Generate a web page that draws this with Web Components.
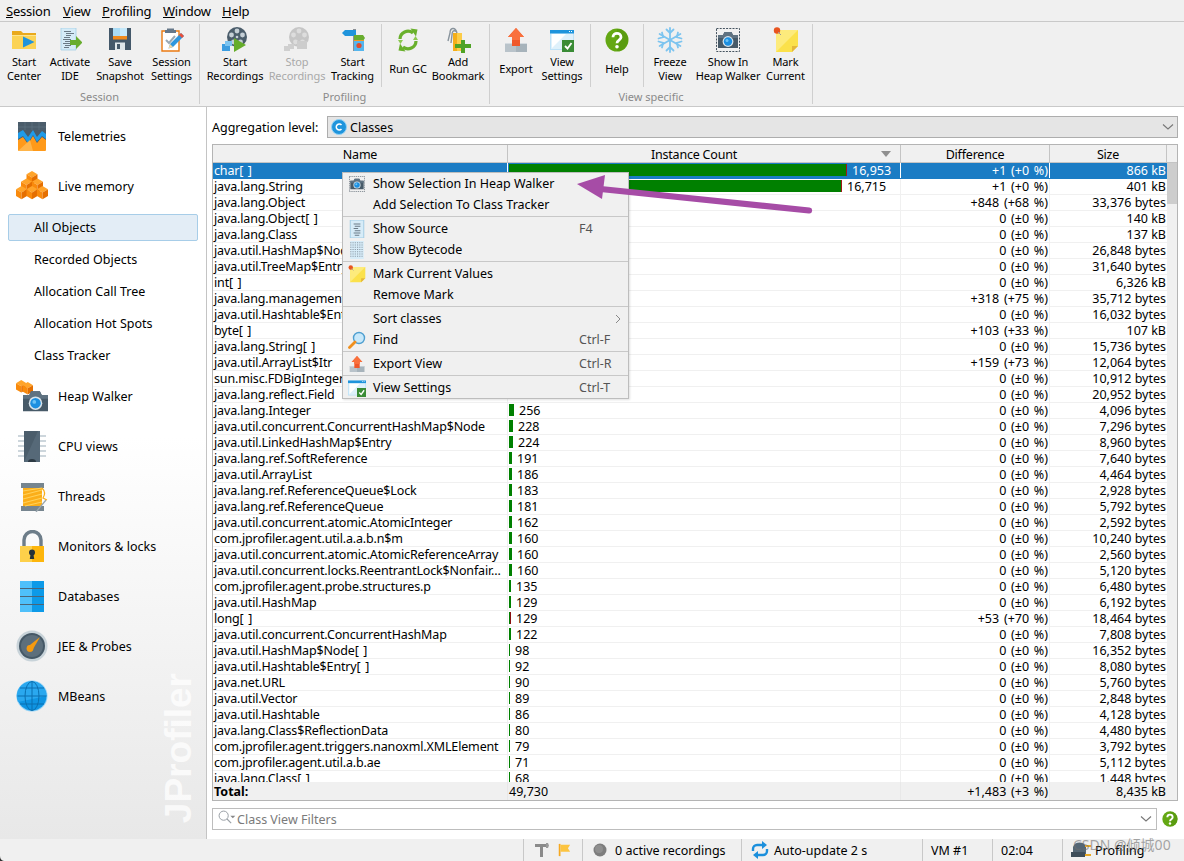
<!DOCTYPE html>
<html><head><meta charset="utf-8">
<style>
html,body{margin:0;padding:0;background:#f0f0f0}
body{font:12.5px "Noto Sans","Noto Sans CJK SC",sans-serif;color:#000}
</style></head><body>
<jp-app></jp-app>
<script>
const cube=(x,y,s=1)=>`<g transform="translate(${x} ${y}) scale(${s})"><path d="M0 3 5 0l5 3-5 3z" fill="#ffa42a"/><path d="M0 3l5 3v6L0 9z" fill="#f98a0c"/><path d="M10 3 5 6v6l5-3z" fill="#e56f00"/></g>`;
const camera=(x,y,s=1)=>`<g transform="translate(${x} ${y}) scale(${s})"><path d="M0 4h5l1.500-3h7L15 4h5v13H0z" fill="#475a68"/><path d="M0 4h5l1.500-3h7L15 4h5v3H0z" fill="#5f7281"/><circle cx="10" cy="10.500" r="5.400" fill="#d8e4ec"/><circle cx="10" cy="10.500" r="4.200" fill="#1c8fe0"/><circle cx="9" cy="9.500" r="1.500" fill="#6cc4f7"/></g>`;
const ICONS={
start:[24,`<path d="M0 3h9l2 2h13v16H0z" fill="#e9a91c"/><path d="M0 7h24v14H0z" fill="#fbd355"/><path d="M0 7h24v1H0z" fill="#fde58e"/><path d="M11 8.500 22.500 14 11 19.500z" fill="#1f94dc"/>`],
ide:[24,`<path d="M3 0h15v22H3z" fill="#d5ebf7" stroke="#a4cfe6" stroke-width=".8"/><g fill="#6b7a86"><path d="M6 3h7v1H6zM8 5h8v1H8zM8 7h5v1H8zM6 9h6v1H6zM5 11h8v1H5zM7 13h5v1H7zM5 15h7v1H5zM7 17h6v1H7zM6 19h5v1H6z"/></g><path d="M12 12h6V8l6.500 6.500L18 21v-4h-6z" fill="#68ad2e"/>`],
save:[24,`<path d="M1 0h22v22H1z" fill="#44586a"/><path d="M5 0h14v11H5z" fill="#a9dbf5"/><path d="M12 0h7v11h-7z" fill="#c5e8fa"/><path d="M5 8h14v3.500H5z" fill="#f08a1d"/><path d="M7 14.500h10V22H7z" fill="#dfe6ea"/><path d="M9 16h3v5H9z" fill="#44586a"/>`],
settings:[24,`<path d="M2 3h17v20H2z" fill="#fff" stroke="#ea7a12" stroke-width="1.400"/><path d="M7 .5h7V2h2v3H5V2h2z" fill="#66788a"/><path d="M6 12l3 3 6-7" fill="none" stroke="#9aa9b4" stroke-width="2"/><path d="M21 5l3 3-11 11-4.500 1.500L10 16z" fill="#2f96dd"/><path d="M21 5l3 3-2 2-3-3z" fill="#e8503a"/><path d="M10 16l3 3-4.500 1.500z" fill="#f4d7a4"/>`],
rec:[26,`<circle cx="15" cy="10" r="10" fill="#4b5d6b"/><g fill="#c5cfd6"><circle cx="15" cy="4" r="2.400"/><circle cx="9.500" cy="8" r="2.400"/><circle cx="20.500" cy="8" r="2.400"/><circle cx="11.500" cy="15" r="2.400"/><circle cx="18.500" cy="15" r="2.400"/><circle cx="15" cy="10" r="1.300"/></g><path d="M0 17h8v7H0z" fill="#3c9de0"/><path d="M3 14h7v5H3z" fill="#7cc4f0"/><path d="M12 11 24 18 12 25z" fill="#66ad2b"/>`],
stoprec:[26,`<circle cx="15" cy="10" r="10" fill="#c6c6c6"/><g fill="#ddd"><circle cx="15" cy="4" r="2.400"/><circle cx="9.500" cy="8" r="2.400"/><circle cx="20.500" cy="8" r="2.400"/><circle cx="11.500" cy="15" r="2.400"/><circle cx="18.500" cy="15" r="2.400"/></g><path d="M0 19h6v5H0zM4 17h6v5H4z" fill="#cfcfcf"/><path d="M13 14h10v8H13z" fill="#cdcdcd"/>`],
track:[24,`<path d="M12 1h3v22h-3z" fill="#8a8f94"/><path d="M1 5 4 2h11v6H4z" fill="#1f94dc"/><path d="M13 7h9l2 3-2 3h-9z" fill="#68ad2e"/><path d="M13 12h10v11H13z" fill="#55b6ee"/><circle cx="18" cy="17.500" r="2.600" fill="#e24b2e"/><path d="M13 12h10v1H13z" fill="#f59a23"/>`],
gc:[26,`<g fill="none" stroke="#69b02c" stroke-width="3.200"><path d="M5 12a8 8 0 0 1 13-6"/><path d="M21 14a8 8 0 0 1-13 6"/></g><path d="M15.500 1.500l7 1-1.500 7zM10.500 24.500l-7-1 1.500-7z" fill="#69b02c"/><path d="M3 13h5l-2.500 4z" fill="#8cc850"/><path d="M23 13h-5l2.500-4z" fill="#8cc850"/>`],
bookmark:[26,`<path d="M8 6h9v18H8z" fill="#f4ae1a"/><path d="M12 6h5v18h-5z" fill="#fccc48"/><path d="M12 6c-2-7-7-5-7 0l-2 8M12 5c-4-3-5 0-5 3l-1 8" fill="none" stroke="#88939c" stroke-width="1.400"/><path d="M16 13h4v4h6v4h-6v5h-4v-5h-6v-4h6z" fill="#4fa325"/>`],
export:[24,`<path d="M1 15h22v9H1z" fill="#b9c3ca"/><path d="M12 15h11v9H12z" fill="#a7b3bb"/><path d="M1 15h22v1H1z" fill="#d5dbe0"/><path d="M12 0l8 9h-4v9H8V9H4z" fill="#f0582a"/><path d="M12 0l8 9h-4v3H8V9H4z" fill="#f9703d"/>`],
viewset:[24,`<path d="M0 2h24v20H0z" fill="#bfe2f7"/><path d="M1 5h22v16H1z" fill="#dff1fb"/><path d="M2 6h14L2 20z" fill="#fff"/><path d="M0 2h24v3.500H0z" fill="#1f94dc"/><g fill="#fff"><path d="M19 3h1v1h-1zM21 3h1v1h-1z"/></g><path d="M12 12h12v12H12z" fill="#3a8c36"/><path d="M15 18l2.500 2.500L21.500 15" fill="none" stroke="#fff" stroke-width="1.800"/>`],
help:[24,`<circle cx="12" cy="12" r="11.500" fill="#64a814"/><path d="M12 1a11 11 0 0 1 0 22z" fill="#5a9c10"/><path d="M8 9.200c0-5 8-5 8 0 0 3-4 3-4 6" fill="none" stroke="#fff" stroke-width="2.800"/><circle cx="12" cy="18.800" r="1.800" fill="#fff"/>`],
freeze:[26,`<g stroke="#7cc4ef" stroke-width="1.800" fill="none" stroke-linecap="round"><path d="M13 1v24M2.600 7l20.800 12M2.600 19l20.800-12"/><path d="M9.500 2.500 13 6l3.500-3.500M9.500 23.500 13 20l3.500 3.500M1.500 11.500l4.700-1.300L5 5.500M24.500 14.500l-4.700 1.300L21 20.500M1.500 14.500l4.700 1.300L5 20.500M24.500 11.500l-4.700-1.300L21 5.500"/></g>`],
heap:[24,`<rect x=".5" y=".5" width="23" height="23" fill="none" stroke="#45535f" stroke-width="1" stroke-dasharray="2 1.200"/>${camera(2,3)}`],
mark:[26,`<path d="M3 3h22v16l-6 6H3z" fill="#fbe14b"/><path d="M3 3h22L3 25z" fill="#fdeb7c"/><path d="M25 19h-6v6z" fill="#e4b73a"/><circle cx="4" cy="3.500" r="3.200" fill="#e8541f"/><path d="M5 5l3 3" stroke="#999" stroke-width="1"/>`],
telemetries:[32,`<rect x="2" y="2" width="28" height="29" rx="1" fill="#ff9a1a"/><path d="M2 2h28v18l-4-3-5 6-4-7-5 8-5-7-5 3z" fill="#4b5d6b"/><path d="M2 13l5-3 5 7 5-7 4 7 5-6 4 3v5l-4-3-5 6-4-7-5 8-5-7-5 3z" fill="#1f9be8"/><path d="M2 31 14 20 17 31z" fill="#ffb54a"/><g stroke="#5f7281" stroke-width=".7"><path d="M9 2v8M16 2v8M23 2v8M2 7h28"/></g>`],
livemem:[32,`${cube(10.500,1,1.1)}${cube(5,8.500,1.1)}${cube(16,8.500,1.1)}${cube(0,16,1.1)}${cube(10.500,16,1.1)}${cube(21,16,1.1)}`],
heapwalker:[32,`${cube(0,0,1.05)}${cube(6.500,2,1.05)}${camera(7,10,1.250)}`],
cpu:[32,`<g fill="#cdd6dc"><path d="M2 5h28v2H2zM2 10h28v2H2zM2 15h28v2H2zM2 20h28v2H2zM2 25h28v2H2z"/></g><path d="M8 1h16v31H8z" fill="#4b5d6b"/><path d="M22 1h2v31H8z" fill="#5b6f7e" opacity=".7"/><path d="M12 32a4 3 0 0 1 8 0z" fill="#2d3a44"/>`],
threads:[32,`<path d="M5 3h23v5H5zM5 26h23v5H5z" fill="#76858f"/><path d="M7 8h19v18H7z" fill="#fbae19"/><g stroke="#ffd15a" stroke-width="1.100"><path d="M7 11l19-3M7 15l19-5M7 19l19-5M7 23l19-5M9 26l17-4"/></g><path d="M20 32 30 20" stroke="#9aa6ae" stroke-width="1.300"/><path d="M26 8c3 3 3 7 1 10l4 2" fill="none" stroke="#fbae19" stroke-width="1.200"/>`],
monitors:[32,`<path d="M8 17V10a8.500 8.500 0 0 1 17 0v7" fill="none" stroke="#6d7d89" stroke-width="3.400"/><path d="M4 16h12v16H4z" fill="#fdd04a"/><path d="M16 16h12v16H16z" fill="#fdb60c"/><circle cx="16" cy="22.500" r="3" fill="#263238"/><path d="M14.800 23h2.400l1 6h-4.400z" fill="#263238"/>`],
db:[32,`<path d="M4 1h12v31H4z" fill="#4fc0fa"/><path d="M16 1h12v31H16z" fill="#0d9ae8"/><g fill="#4c6577"><path d="M4 8h24v1H4zM4 16h24v1H4zM4 24h24v1H4z"/></g>`],
jee:[32,`<circle cx="16" cy="16" r="15.500" fill="#c8d3d9"/><circle cx="16" cy="16" r="13" fill="#455866"/><circle cx="16" cy="16" r="11" fill="#5d6f7c"/><path d="M12 16.500 24 7 16.500 20z" fill="#f59a10"/><circle cx="14" cy="18.500" r="3.400" fill="#f59a10"/>`],
mbeans:[32,`<circle cx="16" cy="16" r="15.500" fill="#8fd0f5"/><circle cx="16" cy="16" r="14.500" fill="#0f94e2"/><path d="M16 1.500A14.500 14.500 0 0 1 30.500 16L2 22A14.500 14.500 0 0 1 16 1.500z" fill="#2aa8ef"/><g fill="none" stroke="#0a6fb0" stroke-width="1"><ellipse cx="16" cy="16" rx="7" ry="14.500"/><path d="M16 1.500v29M1.500 16h29M4 8h24M4 24h24"/></g>`],
source:[16,`<path d="M2 0h12v16H2z" fill="#d7ecf8" stroke="#9cc9e2" stroke-width=".8"/><g fill="#6b7a86"><path d="M5 3h6v1H5zM6 5h5v1H6zM5 7h4v1H5zM6 9h5v1H6zM5 11h6v1H5zM6 13h4v1H6z"/></g>`],
bytecode:[16,`<path d="M2 0h12v16H2z" fill="#d7ecf8"/><path d="M2.500 1v14M4.500 1v14M6.500 1v14M8.500 1v14M10.500 1v14M12.500 1v14" stroke="#8b99a5" stroke-width="1" stroke-dasharray="1 1"/>`],
find:[18,`<circle cx="11" cy="7" r="5.500" fill="#c8e8fa" stroke="#4f9fd0" stroke-width="1.400"/><path d="M7 11 1.500 16.500" stroke="#ef8f1d" stroke-width="2.800" stroke-linecap="round"/>`],
pin:[16,`<path d="M1 2h13v3H1z" fill="#8a8a8a"/><path d="M6 4h3v11H6z" fill="#8a8a8a"/><path d="M12 1h2l1 2.500L14 6h-2z" fill="#9a9a9a"/>`],
flag:[16,`<path d="M2 1h2v14H2z" fill="#f6a821"/><path d="M4 2h11l-2.500 4L15 10H4z" fill="#fcc440"/>`],
circle:[16,`<circle cx="8" cy="8" r="6.500" fill="#7d7d7d"/><circle cx="7" cy="7" r="4" fill="#8f8f8f"/>`],
refresh:[18,`<g fill="none" stroke="#1b8fdc" stroke-width="2.400"><path d="M2 10V8a4 4 0 0 1 4-4h6"/><path d="M16 8v2a4 4 0 0 1-4 4H6"/></g><path d="M11 0l5 4-5 4zM7 10l-5 4 5 4z" fill="#1b8fdc"/>`],
profiling:[22,`<path d="M2 8a7 7 0 0 1 13 0v9H2z" fill="#546674"/><path d="M0 13h14v5H0z" fill="#3d4d59"/><path d="M14 6h6v2h-6zM14 15h6v2h-6z" fill="#e7a824"/>`],
filter:[24,`<circle cx="8" cy="8" r="5.500" fill="none" stroke="#9aa0a6" stroke-width="1.200"/><path d="M12 12l5 5" stroke="#9aa0a6" stroke-width="1.400"/><path d="M16 8h6l-3 3z" fill="#888"/>`],
classc:[16,`<circle cx="8" cy="8" r="7.500" fill="#1f94dc"/><circle cx="8" cy="8" r="7.500" fill="none" stroke="#8fd0f5" stroke-width="1"/><path d="M10.500 6a3 3 0 1 0 0 4" fill="none" stroke="#fff" stroke-width="1.500"/>`]
};
function def(tag,css,html,init){
  customElements.define(tag,class extends HTMLElement{
    connectedCallback(){
      if(this.shadowRoot)return;
      const r=this.attachShadow({mode:'open'});
      const h=typeof html==='function'?html(this):html;
      r.innerHTML=`<style>${css}</style>${h}`;
      if(init)init(this,r);
    }
  });
}
def('jp-icon',':host{display:inline-flex;flex:none;line-height:0}svg{display:block}',el=>{
  const [v,p]=ICONS[el.getAttribute('name')];const s=el.getAttribute('size')||v;
  return `<svg xmlns="http://www.w3.org/2000/svg" width="${s}" height="${s}" viewBox="0 0 ${v} ${v}">${p}</svg>`;
});
def('jp-menubar',`:host{display:flex;height:21px;border-bottom:1px solid #c9c9c9;background:#f0f0f0;align-items:center;font-size:13px;letter-spacing:-.25px;padding-left:6px;flex:none}
u{text-decoration:underline}.w{display:flex}.i{display:block}`,
()=>`<div class="w"><div class="i" style="width:57px"><u>S</u>ession</div><div class="i" style="width:39px"><u>V</u>iew</div><div class="i" style="width:61px"><u>P</u>rofiling</div><div class="i" style="width:59px"><u>W</u>indow</div><div class="i"><u>H</u>elp</div></div>`);
def('jp-tool',`:host{display:flex;flex-direction:column;align-items:center;flex:none}
.ic{height:25px;margin-top:5px;display:flex;align-items:center;justify-content:center}
.l{height:28px;margin-top:3px;display:flex;align-items:center;text-align:center;white-space:nowrap;line-height:14px;font-size:11px;letter-spacing:-.1px}
:host([off]) .l{color:#a9a9a9}`,
el=>`<div class="ic"><jp-icon name="${el.getAttribute('icon')}" size="${el.getAttribute('size')||24}"></jp-icon></div><div class="l"><div>${el.getAttribute('label').replace('|','<br>')}</div></div>`,
el=>{el.style.width=el.getAttribute('w')+'px'});
def('jp-tool-group',`:host{display:flex;flex-direction:column;border-right:1px solid #cfcfcf;height:80px;margin-top:2px;flex:none}
.row{display:flex;height:61px;margin-top:-2px;flex:none}.t{text-align:center;color:#8a8a8a;font-size:11px;margin-top:6px;height:15px;line-height:16px;flex:none}`,
el=>`<div class="row"><slot></slot></div><div class="t">${el.getAttribute('title')}</div>`);
def('jp-sep',`:host{display:block;width:1px;height:63px;background:#cfcfcf;flex:none;margin-top:2px}`,'');
def('jp-toolbar',`:host{display:flex;height:85px;border-bottom:1px solid #c9c9c9;background:#f0f0f0;box-sizing:border-box;flex:none}`,'<slot></slot>');
def('jp-nav',`:host{display:flex;align-items:center;height:50px;padding-left:16px;font-size:12.5px}.t{margin-left:10px}`,
el=>`<jp-icon name="${el.getAttribute('icon')}" size="32"></jp-icon><div class="t">${el.getAttribute('label')}</div>`);
def('jp-sub',`:host{display:flex;align-items:center;height:32px;padding:0 8px;font-size:12.5px}
.b{flex:1;height:27px;box-sizing:border-box;display:flex;align-items:center;padding-left:25px;border:1px solid transparent;border-radius:2px}
:host([sel]) .b{background:#e3edf6;border-color:#a7cde8}`,
el=>`<div class="b">${el.getAttribute('label')}</div>`);
def('jp-sidebar',`:host{display:block;position:relative;width:206px;flex:none;border-right:1px solid #c4c4c4;background:linear-gradient(#fff 45%,#e8e8e8 100%);padding-top:4px;overflow:hidden}
.logo{position:absolute;left:159px;top:566px;writing-mode:vertical-rl;transform:rotate(180deg);font:bold 37px "Liberation Sans",sans-serif;color:rgba(255,255,255,.75);line-height:40px;white-space:nowrap}`,
`<jp-nav icon="telemetries" label="Telemetries"></jp-nav><jp-nav icon="livemem" label="Live memory"></jp-nav>
<div><jp-sub sel label="All Objects"></jp-sub><jp-sub label="Recorded Objects"></jp-sub><jp-sub label="Allocation Call Tree"></jp-sub><jp-sub label="Allocation Hot Spots"></jp-sub><jp-sub label="Class Tracker"></jp-sub></div>
<jp-nav icon="heapwalker" label="Heap Walker"></jp-nav><jp-nav icon="cpu" label="CPU views"></jp-nav><jp-nav icon="threads" label="Threads"></jp-nav><jp-nav icon="monitors" label="Monitors &amp; locks"></jp-nav><jp-nav icon="db" label="Databases"></jp-nav><jp-nav icon="jee" label="JEE &amp; Probes"></jp-nav><jp-nav icon="mbeans" label="MBeans"></jp-nav>
<div class="logo">JProfiler</div>`);
def('jp-combo',`:host{display:flex;align-items:center;height:22px;margin-top:9px;flex:none;font-size:12.5px}
.lab{width:115px;flex:none}
.box{flex:1;height:22px;box-sizing:border-box;background:#e5e5e5;border:1px solid #adadad;display:flex;align-items:center;padding-left:3px}
.tx{margin-left:3px;flex:1}svg{margin-right:3px}`,
`<div class="lab">Aggregation level:</div><div class="box"><jp-icon name="classc" size="16"></jp-icon><div class="tx">Classes</div><svg width="12" height="8" viewBox="0 0 12 8"><path d="M1 1.500l5 4.500 5-4.500" fill="none" stroke="#777" stroke-width="1.100"/></svg></div>`);
const R=`char[ ]|16,953|338|+1 (+0 %)|866 kB
java.lang.String|16,715|333|+1 (+0 %)|401 kB
java.lang.Object|||+848 (+68 %)|33,376 bytes
java.lang.Object[ ]|||0 (±0 %)|140 kB
java.lang.Class|||0 (±0 %)|137 kB
java.util.HashMap$Node|||0 (±0 %)|26,848 bytes
java.util.TreeMap$Entry|||0 (±0 %)|31,640 bytes
int[ ]|||0 (±0 %)|6,326 kB
java.lang.management|||+318 (+75 %)|35,712 bytes
java.util.Hashtable$Entry|||0 (±0 %)|16,032 bytes
byte[ ]|||+103 (+33 %)|107 kB
java.lang.String[ ]|||0 (±0 %)|15,736 bytes
java.util.ArrayList$Itr|||+159 (+73 %)|12,064 bytes
sun.misc.FDBigInteger|||0 (±0 %)|10,912 bytes
java.lang.reflect.Field|||0 (±0 %)|20,952 bytes
java.lang.Integer|256|5|0 (±0 %)|4,096 bytes
java.util.concurrent.ConcurrentHashMap$Node|228|4|0 (±0 %)|7,296 bytes
java.util.LinkedHashMap$Entry|224|4|0 (±0 %)|8,960 bytes
java.lang.ref.SoftReference|191|3|0 (±0 %)|7,640 bytes
java.util.ArrayList|186|3|0 (±0 %)|4,464 bytes
java.lang.ref.ReferenceQueue$Lock|183|3|0 (±0 %)|2,928 bytes
java.lang.ref.ReferenceQueue|181|3|0 (±0 %)|5,792 bytes
java.util.concurrent.atomic.AtomicInteger|162|3|0 (±0 %)|2,592 bytes
com.jprofiler.agent.util.a.a.b.n$m|160|3|0 (±0 %)|10,240 bytes
java.util.concurrent.atomic.AtomicReferenceArray|160|3|0 (±0 %)|2,560 bytes
java.util.concurrent.locks.ReentrantLock$Nonfair...|160|3|0 (±0 %)|5,120 bytes
com.jprofiler.agent.probe.structures.p|135|2|0 (±0 %)|6,480 bytes
java.util.HashMap|129|2|0 (±0 %)|6,192 bytes
long[ ]|129|r2|+53 (+70 %)|18,464 bytes
java.util.concurrent.ConcurrentHashMap|122|2|0 (±0 %)|7,808 bytes
java.util.HashMap$Node[ ]|98|1|0 (±0 %)|16,352 bytes
java.util.Hashtable$Entry[ ]|92|1|0 (±0 %)|8,080 bytes
java.net.URL|90|1|0 (±0 %)|5,760 bytes
java.util.Vector|89|1|0 (±0 %)|2,848 bytes
java.util.Hashtable|86|1|0 (±0 %)|4,128 bytes
java.lang.Class$ReflectionData|80|1|0 (±0 %)|4,480 bytes
com.jprofiler.agent.triggers.nanoxml.XMLElement|79|1|0 (±0 %)|3,792 bytes
com.jprofiler.agent.util.a.b.ae|71|1|0 (±0 %)|5,112 bytes
java.lang.Class[ ]|68|1|0 (±0 %)|1,448 bytes`.split('\n').map(l=>l.split('|'));
def('jp-row',`:host{display:grid;grid-template-columns:295px 393px 149px 117px;height:16px;box-sizing:border-box;border-bottom:1px solid #f0f0f0;line-height:15px;font-size:12.5px;white-space:nowrap}
:host([sel]){background:#1b7cc4;color:#fff;border-bottom-color:#1b7cc4}
div{overflow:hidden;border-right:1px solid #f0f0f0;box-sizing:border-box}
:host([sel]) div{border-right-color:#fff}
.n{padding-left:1px;letter-spacing:-.15px;word-spacing:1.500px}.c{display:flex;align-items:stretch;padding-left:1px}
.r{text-align:right;padding-right:1px}.d{word-spacing:1.500px}
i{display:block;flex:none;background:green;margin:1px 5px 2px 0;position:relative}
i.red{background:linear-gradient(90deg,green 50%,#8a1010 50%)}
i.end::after{content:"";position:absolute;right:0;top:0;bottom:0;width:1.500px;background:#a01818}
span{display:block}`,
el=>{const n=el.getAttribute('n'),c=el.getAttribute('c')||'',b=el.getAttribute('b')||'',d=el.getAttribute('d'),s=el.getAttribute('s');
const red=b[0]==='r',w=parseInt(red?b.slice(1):b)||0;
return `<div class="n">${n}</div><div class="c">${w?`<i class="${red?'red':(w>100?'end':'')}" style="width:${w}px"></i>`:''}<span>${c}</span></div><div class="r d">${d}</div><div class="r" style="border-right:0">${s}</div>`});
def('jp-table',`:host{display:flex;flex-direction:column;height:657px;margin-top:6px;border:1px solid #b4b4b4;box-sizing:border-box;background:#fff;flex:none;position:relative}
.h{display:grid;grid-template-columns:295px 393px 149px 117px 1fr;height:18px;background:#f0f0f0;border-bottom:1px solid #c4c4c4;box-sizing:border-box;line-height:19px;font-size:12.5px;letter-spacing:-.2px;flex:none}
.h div{text-align:center;border-right:1px solid #c4c4c4;position:relative;height:17px}
.h div:last-child{border-right:0}
.h .ic{padding-right:20px}
.h svg{position:absolute;right:8px;top:6px}
.m{display:flex;height:619px;flex:none;overflow:hidden}
.b{width:954px;overflow:hidden;flex:none}
.s{flex:1;background:#f0f0f0;position:relative}.s b{display:block;height:41px;background:#cdcdcd}
.t{display:grid;grid-template-columns:295px 393px 149px 117px;height:18px;background:#f0f0f0;line-height:19px;font-size:12.5px;flex:none}
.t div{padding-left:1px;border-right:1px solid #e8e8e8;box-sizing:border-box;height:18px}.t .r{text-align:right;padding-right:1px}.t .r:last-child{border-right:0}.t .w{word-spacing:1.500px}`,
`<div class="h"><div>Name</div><div class="ic">Instance Count<svg width="12" height="7" viewBox="0 0 12 7"><path d="M1 0h10L6 6z" fill="#8f8f8f"/></svg></div><div>Difference</div><div>Size</div><div></div></div>
<div class="m"><div class="b" id="b"></div><div class="s"><b></b></div></div>
<div class="t"><div><strong>Total:</strong></div><div>49,730</div><div class="r w">+1,483 (+3 %)</div><div class="r">8,435 kB</div></div>`,
(el,r)=>{const b=r.getElementById('b');R.forEach((x,i)=>{const e=document.createElement('jp-row');
['n','c','b','d','s'].forEach((k,j)=>e.setAttribute(k,x[j]));if(i===0)e.setAttribute('sel','');b.appendChild(e)})});
def('jp-filter',`:host{display:flex;align-items:center;height:22px;margin-top:7px;flex:none}
.box{width:945px;height:22px;box-sizing:border-box;background:#fff;border:1px solid #bdbdbd;display:flex;align-items:center;color:#7a7a7a;font-size:12.5px;padding-left:4px}
.tx{flex:1}jp-icon.h{margin-left:5px}svg{margin-right:4px}`,
`<div class="box"><jp-icon name="filter" size="20"></jp-icon><div class="tx">Class View Filters</div><svg width="12" height="8" viewBox="0 0 12 8"><path d="M1 1.500l5 4.500 5-4.500" fill="none" stroke="#777" stroke-width="1.100"/></svg></div><jp-icon class="h" name="help" size="16"></jp-icon>`);
def('jp-status',`:host{display:flex;height:22px;background:#f0f0f0;flex:none;align-items:stretch;font-size:12.5px;position:relative}
.sp{width:523px}.c{border-left:1px solid #c8c8c8;display:flex;align-items:center;box-sizing:border-box}`,
`<div class="sp"></div>
<div class="c" style="width:59px;padding-left:10px;gap:7px"><jp-icon name="pin" size="16"></jp-icon><jp-icon name="flag" size="14"></jp-icon></div>
<div class="c" style="width:159px;padding-left:9px"><jp-icon name="circle" size="16"></jp-icon><span style="margin-left:7px">0 active recordings</span></div>
<div class="c" style="width:181px;padding-left:9px"><jp-icon name="refresh" size="18"></jp-icon><span style="margin-left:5px">Auto-update 2 s</span></div>
<div class="c" style="width:70px;padding-left:8px">VM #1</div>
<div class="c" style="width:70px;padding-left:8px">02:04</div>
<div class="c" style="flex:1;padding-left:8px"><jp-icon name="profiling" size="22"></jp-icon><span style="margin-left:2px">Profiling</span></div>`);
def('jp-mi',`:host{display:flex;align-items:center;height:21px;font-size:12.5px;position:relative}
.ic{width:30px;flex:none;display:flex;justify-content:center;padding-right:2px;box-sizing:border-box}
.t{flex:1}.k{width:49px;flex:none;color:#555}
svg{position:absolute;right:7px;top:6px}`,
el=>`<div class="ic">${el.getAttribute('icon')?`<jp-icon name="${el.getAttribute('icon')}" size="${el.getAttribute('sz')||16}"></jp-icon>`:''}</div><div class="t">${el.getAttribute('label')}</div><div class="k">${el.getAttribute('key')||''}</div>${el.hasAttribute('sub')?'<svg width="6" height="10" viewBox="0 0 6 10"><path d="M1 1l4 4-4 4" fill="none" stroke="#888"/></svg>':''}`);
def('jp-menu',`:host{position:absolute;left:342px;top:172px;width:287px;box-sizing:border-box;background:#f0f0f0;border:1px solid #bdbdbd;box-shadow:1px 1px 2px rgba(0,0,0,.12);z-index:3}
hr{border:0;margin:1px 0;height:1px;background:#c8c8c8}`,
`<jp-mi icon="heap" label="Show Selection In Heap Walker"></jp-mi><jp-mi label="Add Selection To Class Tracker"></jp-mi><hr>
<jp-mi icon="source" sz="18" label="Show Source" key="F4"></jp-mi><jp-mi icon="bytecode" sz="18" label="Show Bytecode"></jp-mi><hr>
<jp-mi icon="mark" sz="18" label="Mark Current Values"></jp-mi><jp-mi label="Remove Mark"></jp-mi><hr>
<jp-mi label="Sort classes" sub></jp-mi><jp-mi icon="find" sz="18" label="Find" key="Ctrl-F"></jp-mi><hr>
<jp-mi icon="export" label="Export View" key="Ctrl-R"></jp-mi><hr>
<jp-mi icon="viewset" sz="18" label="View Settings" key="Ctrl-T"></jp-mi>`);
def('jp-arrow',`:host{position:absolute;left:570px;top:170px;z-index:4;line-height:0}`,
`<svg width="250" height="50" viewBox="570 170 250 50"><path d="M809.500 207.500 601 186l-.8 6 208.500 21.500a3 3 0 0 0 .800-6z" fill="#a64ca6"/><path d="M577 184l28-9-3 24z" fill="#a64ca6"/></svg>`);
def('jp-app',`:host{display:flex;flex-direction:column;width:1184px;height:861px;overflow:hidden;position:relative;background:#f0f0f0}
.main{display:flex;flex:1;min-height:0;background:#fff}
.content{flex:1;display:flex;flex-direction:column;padding:0 6px 0 5px;min-width:0}
.wm{position:absolute;left:1073px;top:834px;font:14px "Noto Sans","Noto Sans CJK SC",sans-serif;color:rgba(110,110,110,.6);z-index:5;white-space:nowrap}
.cn{position:absolute;left:0;bottom:0;z-index:5;line-height:0}`,
`<jp-menubar></jp-menubar>
<jp-toolbar>
<jp-tool-group title="Session" style="width:199px"><div style="width:4px"></div><jp-tool w="40" icon="start" label="Start|Center"></jp-tool><jp-tool w="52" icon="ide" label="Activate|IDE"></jp-tool><jp-tool w="48" icon="save" label="Save|Snapshot"></jp-tool><jp-tool w="55" icon="settings" label="Session|Settings"></jp-tool></jp-tool-group>
<jp-tool-group title="Profiling" style="width:289px"><jp-tool w="70" icon="rec" size="26" label="Start|Recordings"></jp-tool><jp-tool w="54" off icon="stoprec" size="26" label="Stop|Recordings"></jp-tool><jp-tool w="57" icon="track" label="Start|Tracking"></jp-tool><jp-sep></jp-sep><jp-tool w="52" icon="gc" size="26" label="Run GC"></jp-tool><jp-tool w="48" icon="bookmark" size="26" label="Add|Bookmark"></jp-tool></jp-tool-group>
<jp-tool-group title="View specific" style="width:322px"><jp-tool w="52" icon="export" label="Export"></jp-tool><jp-tool w="40" icon="viewset" label="View|Settings"></jp-tool><div style="width:8px"></div><jp-sep></jp-sep><jp-tool w="52" icon="help" label="Help"></jp-tool><jp-sep></jp-sep><jp-tool w="52" icon="freeze" size="26" label="Freeze|View"></jp-tool><jp-tool w="64" icon="heap" label="Show In|Heap Walker"></jp-tool><jp-tool w="51" icon="mark" size="26" label="Mark|Current"></jp-tool></jp-tool-group>
</jp-toolbar>
<div class="main"><jp-sidebar></jp-sidebar><div class="content"><jp-combo></jp-combo><jp-table></jp-table><jp-filter></jp-filter></div></div>
<jp-status></jp-status>
<jp-menu></jp-menu><jp-arrow></jp-arrow>
<div class="wm">CSDN @倾城00</div>
<svg class="cn" width="4" height="5" viewBox="0 0 4 5"><path d="M0 0v5h4A4 5 0 0 1 0 0z" fill="#333"/></svg>`);
</script></body></html>
